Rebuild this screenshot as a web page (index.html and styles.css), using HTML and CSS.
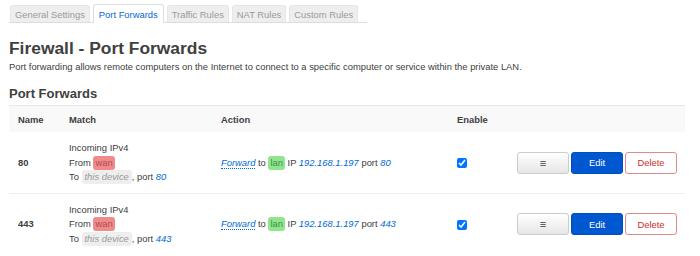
FILE: index.html
```html
<!DOCTYPE html>
<html>
<head>
<meta charset="utf-8">
<link rel="stylesheet" href="styles.css">
</head>
<body>
<div class="page">
  <ul class="tabs">
    <li class="tab">General Settings</li>
    <li class="tab active">Port Forwards</li>
    <li class="tab">Traffic Rules</li>
    <li class="tab">NAT Rules</li>
    <li class="tab">Custom Rules</li>
  </ul>
  <h2 class="title">Firewall - Port Forwards</h2>
  <p class="desc">Port forwarding allows remote computers on the Internet to connect to a specific computer or service within the private LAN.</p>
  <h3 class="section">Port Forwards</h3>
  <table class="grid">
    <thead>
      <tr>
        <th class="c-name">Name</th>
        <th class="c-match">Match</th>
        <th class="c-action">Action</th>
        <th class="c-enable">Enable</th>
        <th class="c-btns"></th>
      </tr>
    </thead>
    <tbody>
      <tr>
        <td class="c-name">80</td>
        <td class="c-match">
          <div>Incoming IPv4</div>
          <div>From <span class="badge red">wan</span></div>
          <div>To <span class="badge gray">this device</span>, port <var>80</var></div>
        </td>
        <td class="c-action"><span class="dotted">Forward</span> to <span class="badge green">lan</span> IP <var>192.168.1.197</var> port <var>80</var></td>
        <td class="c-enable"><input type="checkbox" checked class="cb"></td>
        <td class="c-btns"><div class="btns"><button class="btn plain">&#8801;</button><button class="btn edit">Edit</button><button class="btn del">Delete</button></div></td>
      </tr>
      <tr>
        <td class="c-name">443</td>
        <td class="c-match">
          <div>Incoming IPv4</div>
          <div>From <span class="badge red">wan</span></div>
          <div>To <span class="badge gray">this device</span>, port <var>443</var></div>
        </td>
        <td class="c-action"><span class="dotted">Forward</span> to <span class="badge green">lan</span> IP <var>192.168.1.197</var> port <var>443</var></td>
        <td class="c-enable"><input type="checkbox" checked class="cb"></td>
        <td class="c-btns"><div class="btns"><button class="btn plain">&#8801;</button><button class="btn edit">Edit</button><button class="btn del">Delete</button></div></td>
      </tr>
    </tbody>
  </table>
</div>
</body>
</html>
```
FILE: styles.css
```css
html, body {
  margin: 0;
  padding: 0;
  background: #fff;
}
body {
  font-family: "Liberation Sans", Arial, sans-serif;
  font-size: 9.4px;
  color: #404040;
}
.page {
  padding: 4px 15px 0 9px;
}
.tabs {
  display: inline-flex;
  list-style: none;
  margin: 0;
  padding: 0 6px 0 1px;
  border-bottom: 1px solid #ddd;
  height: 18px;
  white-space: nowrap;
}
.tab {
  margin-right: 3px;
  margin-top: 1px;
  padding: 0 4px;
  line-height: 17px;
  background: #eee;
  color: #9a9a9a;
  border: 1px solid #e6e6e6;
  border-bottom: none;
  border-radius: 3px 3px 0 0;
  font-size: 9.4px;
}
.tab.active {
  margin-top: 0;
  padding: 0 5px;
  background: #fff;
  color: #0069d6;
  border-color: #ddd;
  height: 18px;
  line-height: 19px;
  margin-bottom: -1px;
}
.title {
  margin: 14px 0 0 0;
  font-size: 17.4px;
  line-height: 22px;
  color: #404040;
  font-weight: bold;
}
.desc {
  margin: 1px 0 0 0;
  line-height: 14px;
}
.section {
  margin: 11px 0 0 0;
  font-size: 13px;
  line-height: 18px;
  font-weight: bold;
  color: #404040;
}
.grid {
  margin-top: 2px;
  width: 676px;
  border-collapse: collapse;
  border-top: 1px solid #e6e6e6;
}
.grid th {
  background: #f9f9f9;
  text-align: left;
  font-weight: bold;
  height: 26px;
  padding: 0 9px;
  color: #404040;
}
.grid td {
  padding: 9px 9px 8px 9px;
  vertical-align: middle;
  line-height: 14.5px;
  border-bottom: 1px solid #eee;
}
.grid tbody tr:last-child td {
  border-bottom: none;
}
.c-name { width: 33px; font-weight: bold; }
.grid th.c-name { width: 33px; }
.grid td.c-name { color: #404040; }
.c-match { width: 134px; }
.c-action { width: 218px; }
.c-enable { width: 42px; }
var {
  font-style: italic;
  color: #0069d6;
}
.dotted {
  font-style: italic;
  color: #0069d6;
  border-bottom: 1px dotted #0069d6;
}
.badge {
  display: inline-block;
  border-radius: 3px;
  padding: 0 2px;
  line-height: 14px;
  vertical-align: baseline;
}
.badge.red {
  background: #f08b8b;
  color: #b04d4d;
}
.badge.green {
  background: #8ee68e;
  color: #4a8a4a;
}
.badge.gray {
  background: #eee;
  color: #999;
  font-style: italic;
  padding: 0 3px;
}
.cb {
  margin: 0;
  width: 10px;
  height: 10px;
  accent-color: #0075ff;
  vertical-align: middle;
}
.c-btns {
  padding-right: 8px !important;
}
.btns {
  display: flex;
  justify-content: flex-end;
  gap: 2px;
}
.btn {
  font-family: "Liberation Sans", Arial, sans-serif;
  font-size: 9.4px;
  width: 52px;
  height: 22px;
  border-radius: 3px;
  padding: 0;
  margin: 0;
  cursor: pointer;
}
.btn.plain {
  background: linear-gradient(#fff, #e6e6e6);
  border: 1px solid #ccc;
  color: #404040;
  font-size: 11px;
}
.btn.edit {
  background: #0058d0;
  border: 1px solid #004fc0;
  color: #fff;
}
.btn.del {
  background: #fff;
  border: 1px solid #e08a8a;
  color: #c9302c;
}
```
